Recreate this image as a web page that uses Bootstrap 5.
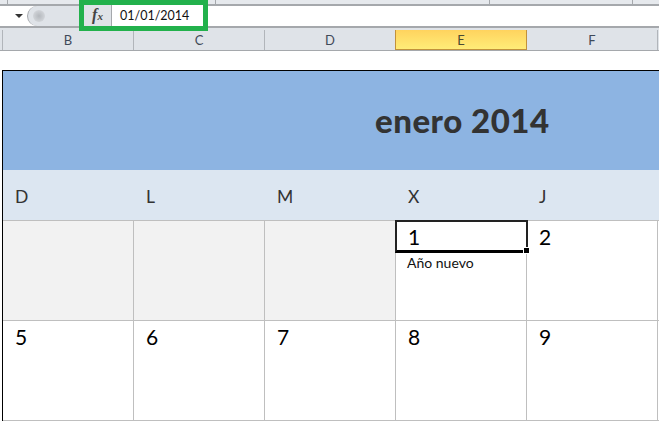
<!DOCTYPE html>
<html lang="es">
<head>
<meta charset="utf-8">
<title>Calendario</title>
<link href="https://cdn.jsdelivr.net/npm/bootstrap@5.3.0/dist/css/bootstrap.min.css" rel="stylesheet">
<style>
html,body{width:659px;height:421px;overflow:hidden;background:#fff;font-family:"Lato","Liberation Sans",sans-serif;color:#000}
.xl-strip{height:6px;background:#e6e9ed;border-bottom:2px solid #a5a8ac}
.xl-tick{width:1px;background:#a5a8ac}
.xl-t1{margin-left:7px}.xl-t2{margin-left:207px}.xl-t3{margin-left:273px}.xl-t4{margin-left:142px}
.xl-formula{height:20px;background:#fff}
.xl-namebox{width:27px}
.xl-arrow{width:0;height:0;border-left:4px solid transparent;border-right:4px solid transparent;border-top:4px solid #333}
.xl-grip{width:53px;background:#dfe3e8;border-radius:11px 0 0 11px;border-left:1px solid #a5a8ac}
.xl-knob{width:12px;height:12px;border-radius:50%;background:radial-gradient(circle,#b4b8bd,#dde0e4);margin-left:5px}
.xl-gap{height:4px;background:#dfe3e8;border-top:2px solid #a5a8ac}
.xl-heads{height:21px;background:#dfe3e8;border-bottom:1px solid #a5a8ac;padding-left:2px;color:#3f4a59;font-size:13px;line-height:21px}
.xl-corner{width:1px;background:#b1b5ba}
.xl-head{width:131px;border-right:1px solid #b1b5ba;text-align:center}
.xl-head-on{width:132px;margin-left:-1px;background:linear-gradient(#ffd35e,#ffec78);border:1px solid #c2913b;border-top:0;color:#4a4a33}
.xl-green{position:absolute;left:79px;top:0;width:129px;height:31px;border:5px solid #22b14c;background:#fff;font-size:12.5px}
.xl-fx{width:28px;background:#dfe3e8;border-right:1px solid #a5a8ac;font:italic bold 16px/20px "Liberation Serif",serif;color:#444;text-align:center}
.xl-fx-sub{font-size:11px}
.xl-val{padding-left:8px;line-height:21px;color:#111}
.cal{margin:19px 0 0 2px;border-left:1px solid #000;border-top:1px solid #000}
.cal-title{height:99px;background:#8db4e2;color:#333;font-weight:900;font-size:33px;letter-spacing:.5px;padding-left:372px;line-height:99px;white-space:nowrap}
.cal-days{height:51px;background:#dce6f1;border-bottom:1px solid #bfbfbf;color:#333;font-size:17.5px;line-height:54px}
.cal-day{width:131px;padding-left:12px}
.cal-week{height:100px;border-bottom:1px solid #bfbfbf}
.cal-cell{width:131px;border-right:1px solid #bfbfbf;padding-left:12px;font-size:21px;line-height:32px;position:relative}
.cal-off{background:#f2f2f2}
.cal-note{font-size:14px;line-height:20px;margin-left:-1px;color:#111}
.cal-sel{position:absolute;left:-1px;top:-1px;width:133px;height:33px;border:2px solid #222;border-bottom-width:3px;border-bottom-color:#000}
.cal-handle{position:absolute;right:-4px;bottom:-4px;width:7px;height:7px;background:#000;border:1px solid #fff}
</style>
</head>
<body class="position-relative">
<div class="xl-strip d-flex">
  <span class="xl-tick xl-t1"></span><span class="xl-tick xl-t2"></span><span class="xl-tick xl-t3"></span><span class="xl-tick xl-t4"></span>
</div>
<div class="xl-formula d-flex">
  <div class="xl-namebox d-flex align-items-center justify-content-end"><span class="xl-arrow me-1"></span></div>
  <div class="xl-grip d-flex align-items-center"><span class="xl-knob"></span></div>
</div>
<div class="xl-gap"></div>
<div class="xl-heads d-flex">
  <div class="xl-corner"></div>
  <div class="xl-head">B</div><div class="xl-head">C</div><div class="xl-head">D</div><div class="xl-head xl-head-on">E</div><div class="xl-head">F</div>
</div>
<div class="xl-green d-flex">
  <div class="xl-fx">f<span class="xl-fx-sub">x</span></div>
  <div class="xl-val">01/01/2014</div>
</div>
<div class="cal">
  <div class="cal-title">enero 2014</div>
  <div class="cal-days d-flex">
    <div class="cal-day">D</div><div class="cal-day">L</div><div class="cal-day">M</div><div class="cal-day">X</div><div class="cal-day">J</div>
  </div>
  <div class="cal-week d-flex">
    <div class="cal-cell cal-off"></div><div class="cal-cell cal-off"></div><div class="cal-cell cal-off"></div>
    <div class="cal-cell">1<div class="cal-note">Año nuevo</div><span class="cal-sel"><span class="cal-handle"></span></span></div>
    <div class="cal-cell">2</div>
  </div>
  <div class="cal-week d-flex">
    <div class="cal-cell">5</div><div class="cal-cell">6</div><div class="cal-cell">7</div><div class="cal-cell">8</div><div class="cal-cell">9</div>
  </div>
</div>
<script src="https://cdn.jsdelivr.net/npm/bootstrap@5.3.0/dist/js/bootstrap.bundle.min.js"></script>
</body>
</html>
